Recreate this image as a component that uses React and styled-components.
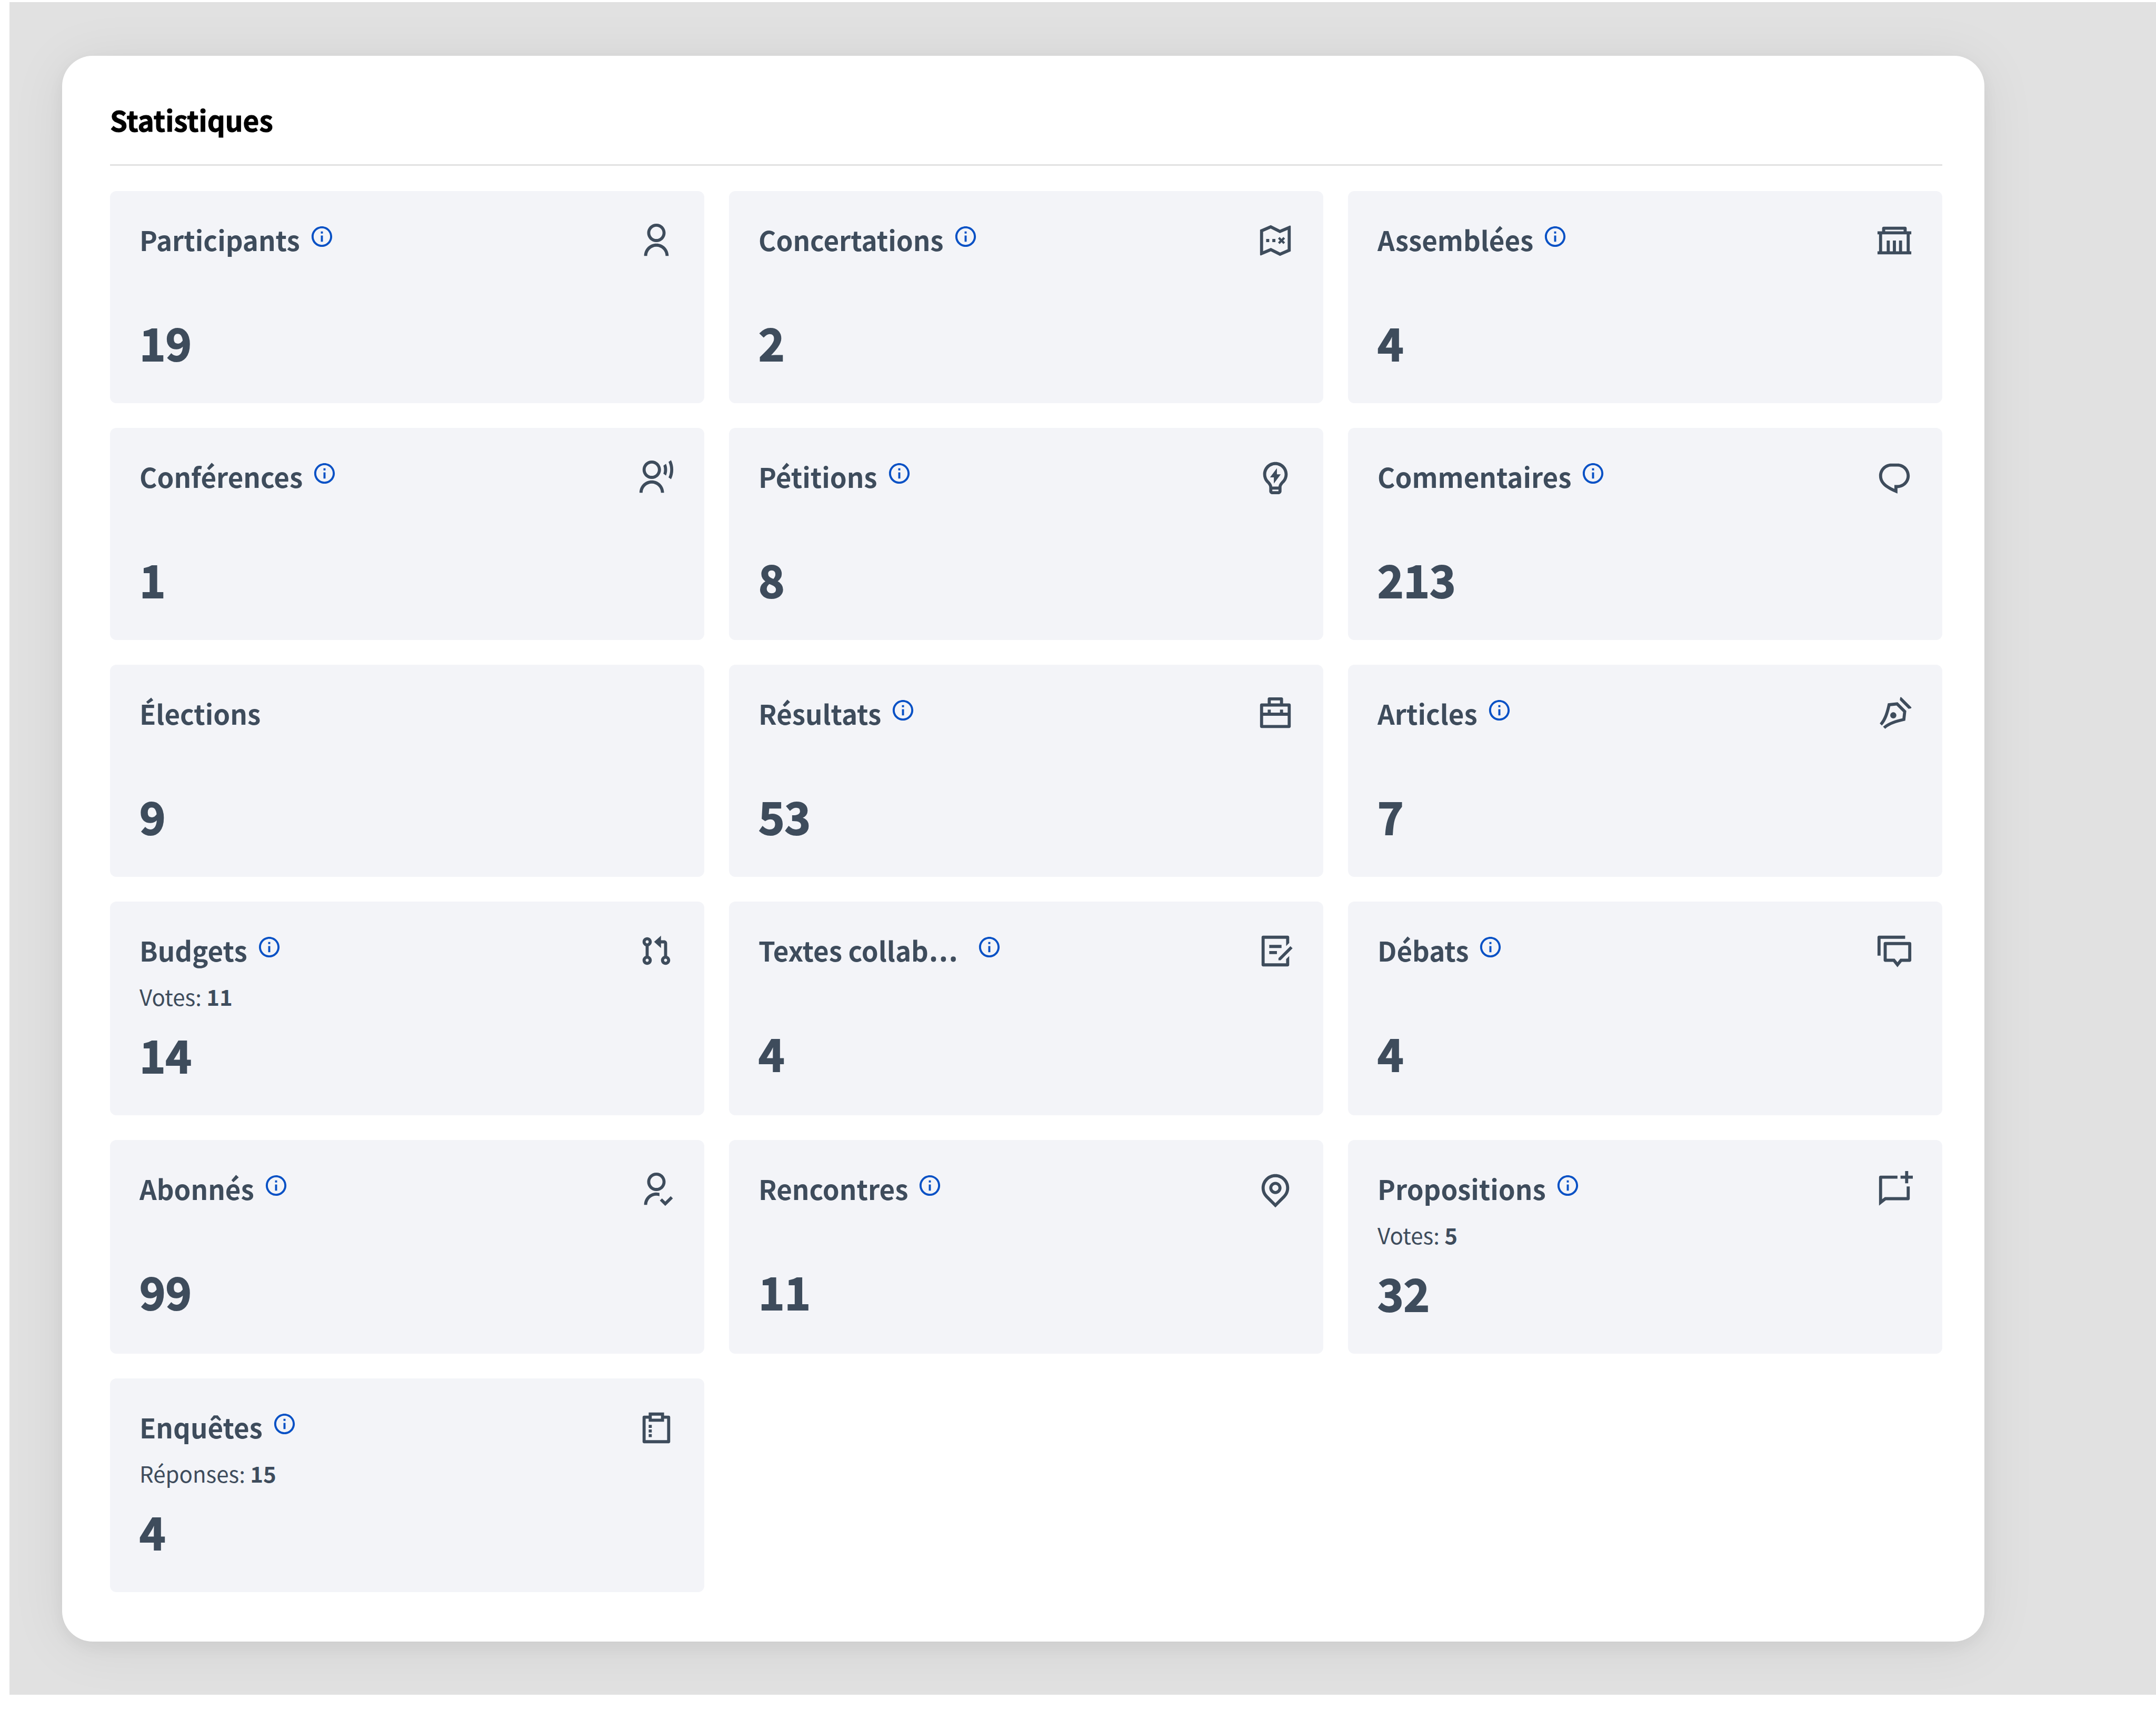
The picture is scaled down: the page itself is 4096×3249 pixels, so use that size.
import React from "react";
import styled, { createGlobalStyle } from "styled-components";
import {
  RiBriefcase2Line,
  RiChat1Line,
  RiChatNewLine,
  RiDiscussLine,
  RiDraftLine,
  RiGitPullRequestLine,
  RiGovernmentLine,
  RiInformationLine,
  RiLightbulbFlashLine,
  RiMapPinLine,
  RiPenNibLine,
  RiSurveyLine,
  RiTreasureMapLine,
  RiUserFollowLine,
  RiUserLine,
  RiUserVoiceLine,
} from "react-icons/ri";

const GlobalStyle = createGlobalStyle`
  body {
    margin: 0;
    background: #ffffff;
    font-family: "Source Sans Pro", "Noto Sans CJK SC", sans-serif;
    color: #3e4c5c;
  }
  *, *::before, *::after {
    box-sizing: border-box;
  }
`;

const Page = styled.main`
  margin: 4px 0 29px 18px;
  padding: 102px 326px 101px 100px;
  background: #e1e1e1;
  overflow: hidden;
`;

const Panel = styled.section`
  padding: 90px 80px 94px 91px;
  border-radius: 58px;
  background: #ffffff;
  box-shadow: 0 10px 30px rgba(0, 0, 0, 0.05), 0 10px 110px rgba(0, 0, 0, 0.07);
`;

const PanelTitle = styled.h2`
  margin: 0 0 48px;
  padding-bottom: 54px;
  border-bottom: 3px solid #e1e1e1;
  color: #000000;
  font-size: 53px;
  font-weight: 700;
  line-height: 62px;
  -webkit-text-stroke: 1px currentColor;
`;

const Grid = styled.div`
  display: grid;
  grid-template-columns: repeat(3, 1fr);
  gap: 47px;
`;

const Tile = styled.article`
  padding: 59px 56px 65px;
  border-radius: 12px;
  background: #f3f4f8;
`;

const TileHead = styled.header`
  display: flex;
  align-items: flex-start;
  height: 70px;

  > svg {
    flex: none;
    width: 70px;
    height: 70px;
    margin-left: auto;
  }
`;

const Name = styled.h3`
  margin: 0;
  min-width: ${(props) => (props.$cut ? "397px" : "0")};
  font-size: 51px;
  font-weight: 700;
  line-height: 67px;
  white-space: nowrap;
`;

// baseline dots, the CJK face centres them
const Dots = styled.span`
  font-family: "Noto Sans", sans-serif;
  font-size: 70px;
  font-weight: 500;
  line-height: 0;
`;

const InfoButton = styled.button`
  display: flex;
  margin: 4px 0 0 18px;
  padding: 0;
  border: 0;
  background: none;
  color: #0851c5;
  cursor: pointer;

  svg {
    width: 47px;
    height: 47px;
  }
`;

const Detail = styled.div`
  min-height: 106px;
`;

const DetailText = styled.p`
  margin: 0;
  padding: 27px 0 34px;
  font-size: 42px;
  line-height: 48px;
`;

const Count = styled.p`
  margin: 0;
  font-size: 84px;
  font-weight: 700;
  line-height: 103px;
  -webkit-text-stroke: 2px currentColor;
`;

const stats = [
  { name: "Participants", count: 19, icon: RiUserLine },
  { name: "Concertations", count: 2, icon: RiTreasureMapLine },
  { name: "Assemblées", count: 4, icon: RiGovernmentLine },
  { name: "Conférences", count: 1, icon: RiUserVoiceLine },
  { name: "Pétitions", count: 8, icon: RiLightbulbFlashLine },
  { name: "Commentaires", count: 213, icon: RiChat1Line },
  { name: "Élections", count: 9 },
  { name: "Résultats", count: 53, icon: RiBriefcase2Line },
  { name: "Articles", count: 7, icon: RiPenNibLine },
  { name: "Budgets", count: 14, icon: RiGitPullRequestLine, label: "Votes", value: 11 },
  { name: "Textes collab", cut: true, count: 4, icon: RiDraftLine },
  { name: "Débats", count: 4, icon: RiDiscussLine },
  { name: "Abonnés", count: 99, icon: RiUserFollowLine },
  { name: "Rencontres", count: 11, icon: RiMapPinLine },
  { name: "Propositions", count: 32, icon: RiChatNewLine, label: "Votes", value: 5 },
  { name: "Enquêtes", count: 4, icon: RiSurveyLine, label: "Réponses", value: 15 },
];

function StatTile({ stat }) {
  const Icon = stat.icon;

  return (
    <Tile>
      <TileHead>
        <Name $cut={stat.cut}>
          {stat.name}
          {stat.cut && <Dots>…</Dots>}
        </Name>
        {Icon && (
          <InfoButton type="button" aria-label={stat.name}>
            <RiInformationLine />
          </InfoButton>
        )}
        {Icon && <Icon />}
      </TileHead>
      <Detail>
        {stat.label && (
          <DetailText>
            {stat.label}: <strong>{stat.value}</strong>
          </DetailText>
        )}
      </Detail>
      <Count>{stat.count}</Count>
    </Tile>
  );
}

function App() {
  return (
    <>
      <GlobalStyle />
      <Page>
        <Panel>
          <PanelTitle>Statistiques</PanelTitle>
          <Grid>
            {stats.map((stat) => (
              <StatTile key={stat.name} stat={stat} />
            ))}
          </Grid>
        </Panel>
      </Page>
    </>
  );
}

export default App;
